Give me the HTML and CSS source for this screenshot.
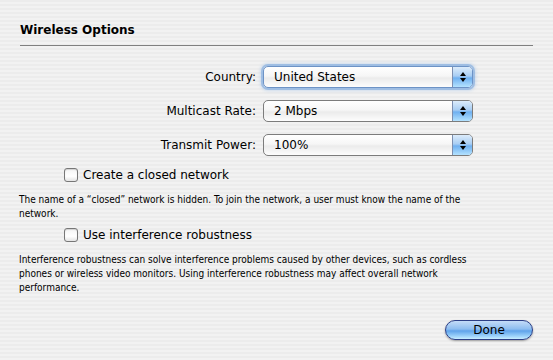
FILE: index.html
```
<!DOCTYPE html>
<html>
<head>
  <title>Wireless Options</title>
  <link rel="stylesheet" href="styles.css">
</head>
<body>
  <div class="sheet">
    <h1>Wireless Options</h1>
    <div class="rule"></div>

    <div class="fields">
      <label class="field-label">Country:</label>
      <div class="popup focused">
        <span class="popup-value">United States</span>
        <span class="stepper"><i class="up"></i><i class="down"></i></span>
      </div>

      <label class="field-label">Multicast Rate:</label>
      <div class="popup">
        <span class="popup-value">2 Mbps</span>
        <span class="stepper"><i class="up"></i><i class="down"></i></span>
      </div>

      <label class="field-label">Transmit Power:</label>
      <div class="popup">
        <span class="popup-value">100%</span>
        <span class="stepper"><i class="up"></i><i class="down"></i></span>
      </div>
    </div>

    <div class="check-row">
      <span class="checkbox"></span>
      <span class="check-label">Create a closed network</span>
    </div>
    <p class="note">The name of a “closed” network is hidden. To join the network, a user must know the name of the<br>network.</p>

    <div class="check-row after-note">
      <span class="checkbox"></span>
      <span class="check-label">Use interference robustness</span>
    </div>
    <p class="note">Interference robustness can solve interference problems caused by other devices, such as cordless<br>phones or wireless video monitors. Using interference robustness may affect overall network<br>performance.</p>

    <div class="actions">
      <button class="done">Done</button>
    </div>
  </div>
</body>
</html>
```

FILE: styles.css
```
body {
  margin: 0;
  padding: 0;
  font-family: "DejaVu Sans", sans-serif;
  color: #000;
  background-color: #efefef;
  background-image: repeating-linear-gradient(to bottom, #ececec 0px, #ececec 2px, #f2f2f2 2px, #f2f2f2 4px);
}
.sheet {
  width: 553px;
  height: 360px;
  padding: 22px 20px 0 20px;
  box-sizing: border-box;
}
h1 {
  margin: 0;
  font-size: 12px;
  line-height: 16px;
  font-weight: bold;
}
.rule {
  height: 1px;
  background-color: #808080;
  margin-top: 7px;
  width: 513px;
}
.fields {
  display: grid;
  grid-template-columns: 236px 210px;
  column-gap: 7px;
  row-gap: 12px;
  margin-top: 20px;
  align-items: center;
}
.field-label {
  text-align: right;
  font-size: 12px;
}
.popup {
  position: relative;
  height: 22px;
  box-sizing: border-box;
  border: 1px solid #7c7c7c;
  border-radius: 5px;
  background: linear-gradient(to bottom, #ffffff 0%, #f6f6f6 45%, #ebebeb 55%, #fdfdfd 100%);
  display: flex;
  align-items: center;
  font-size: 12px;
}
.popup.focused {
  border-color: #6d93c6;
  box-shadow: 0 0 0 2px rgba(120, 165, 220, 0.55), 0 0 3px 3px rgba(140, 180, 230, 0.35);
}
.popup-value {
  flex: 1;
  padding-left: 10px;
}
.stepper {
  width: 19px;
  align-self: stretch;
  border-left: 1px solid #7d8fb0;
  border-radius: 0 4px 4px 0;
  background: linear-gradient(to bottom, #dcecfb 0%, #a8cdf3 45%, #6fb0f0 55%, #b3e2ff 100%);
  display: flex;
  flex-direction: column;
  align-items: center;
  justify-content: center;
  gap: 2px;
}
.stepper i {
  width: 0;
  height: 0;
  border-left: 3px solid transparent;
  border-right: 3px solid transparent;
}
.stepper .up {
  border-bottom: 4px solid #000;
}
.stepper .down {
  border-top: 4px solid #000;
}
.check-row {
  display: flex;
  align-items: center;
  margin-left: 44px;
  margin-top: 11px;
  height: 16px;
}
.check-row.after-note {
  margin-top: 6px;
}
.checkbox {
  width: 12px;
  height: 12px;
  border: 1px solid #777;
  border-radius: 3px;
  background: linear-gradient(to bottom, #f4f4f4, #ffffff 60%, #e4e4e4);
  box-shadow: inset 0 1px 1px rgba(0, 0, 0, 0.15);
}
.check-label {
  font-size: 12px;
  margin-left: 5px;
}
.note {
  margin: 10px 0 0 -1px;
  font-family: "DejaVu Sans Condensed", "DejaVu Sans", sans-serif;
  font-size: 10px;
  line-height: 14px;
}
.actions {
  display: flex;
  justify-content: flex-end;
  margin-top: 25px;
}
.done {
  width: 88px;
  height: 20px;
  padding: 0;
  font-family: "DejaVu Sans", sans-serif;
  font-size: 12px;
  color: #000;
  border: 1px solid #2c3f86;
  border-radius: 10px;
  background: linear-gradient(to bottom, #c4dcf8 0%, #8dbdf0 45%, #5fa3ea 55%, #9fd4fb 85%, #c8eeff 100%);
  box-shadow: 0 1px 2px rgba(0, 0, 0, 0.35);
}
```
